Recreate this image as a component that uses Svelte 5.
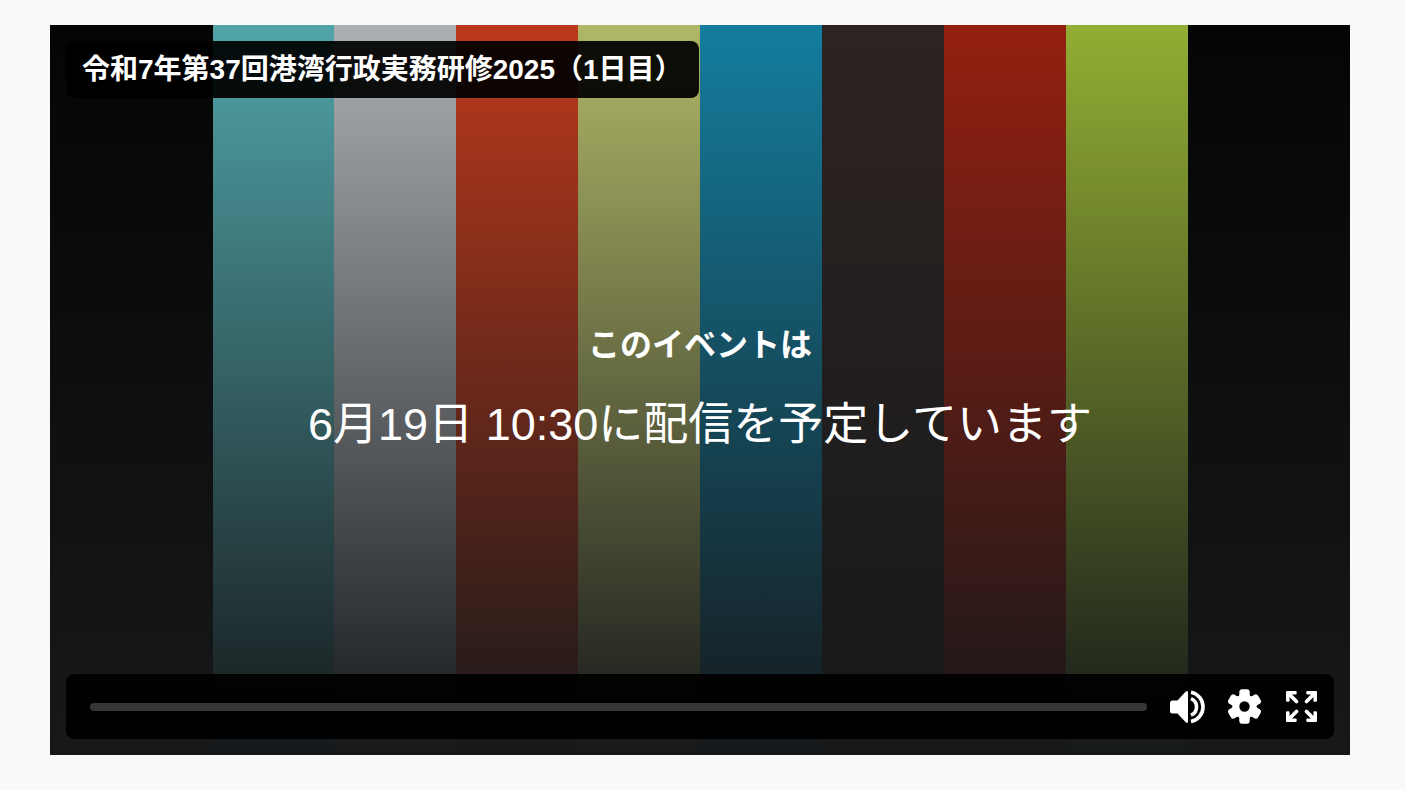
<script>
    let props = $props();
    let title = props.title ?? "令和7年第37回港湾行政実務研修2025（1日目）";
    let startTime = props.startTime ?? "6月19日 10:30";

    let position = $state(0);

    const bars = ["teal", "silver", "orange", "khaki", "blue", "brown", "red", "lime"];
    const teeth = [0, 60, 120, 180, 240, 300];
    const corners = [0, 90, 180, 270];
</script>

<style>
    :global(body) {
        margin: 0;
        background: #f9f9f9;
    }
    .page {
        padding: 25px 55px 35px 50px;
    }
    .player {
        display: grid;
        aspect-ratio: 130 / 73;
        overflow: hidden;
        background: #040505;
        color: #fff;
        font-family: "Liberation Sans", "Noto Sans CJK JP", sans-serif;
    }
    .bars, .shade, .overlay {
        grid-area: 1 / 1;
    }
    .bars {
        display: grid;
        grid-template-columns: repeat(8, 1fr);
        padding: 0 12.5%;
    }
    .teal { background: #50a4a8; }
    .silver { background: #abb0b3; }
    .orange { background: #bc391b; }
    .khaki { background: #b1b767; }
    .blue { background: #147d9e; }
    .brown { background: #2d2422; }
    .red { background: #942010; }
    .lime { background: #92ae33; }
    .shade {
        background: linear-gradient(rgba(22, 24, 26, 0), rgb(22, 24, 26));
    }
    .overlay {
        display: flex;
        flex-direction: column;
        padding: 16px;
    }
    .title {
        align-self: flex-start;
        margin: 0;
        padding: 8px 16px;
        border-radius: 8px;
        background: rgba(0, 0, 0, 0.92);
        font-size: 28px;
        line-height: 41px;
    }
    .message {
        flex: 1;
        display: flex;
        flex-direction: column;
        align-items: center;
        justify-content: center;
        gap: 22px;
        padding-top: 8px;
        text-align: center;
    }
    .message p {
        margin: 0;
    }
    .lead {
        font-size: 32px;
        line-height: 48px;
        font-weight: bold;
    }
    .schedule {
        font-size: 45px;
        line-height: 68px;
    }
    .controls {
        display: flex;
        align-items: center;
        height: 65px;
        padding: 0 4px 0 24px;
        border-radius: 8px;
        background: rgba(0, 0, 0, 0.95);
    }
    .seek {
        appearance: none;
        flex: 1;
        min-width: 0;
        height: 8px;
        margin: 0 12px 0 0;
        border-radius: 4px;
        background: #363636;
        cursor: pointer;
    }
    .seek::-webkit-slider-thumb {
        appearance: none;
        width: 0;
        height: 0;
    }
    button {
        display: grid;
        place-items: center;
        width: 57px;
        height: 57px;
        padding: 0;
        border: 0;
        background: none;
        color: #fff;
        cursor: pointer;
    }
    svg {
        width: 37px;
        height: 37px;
    }
    .line {
        fill: none;
        stroke: currentColor;
    }
</style>

<main class="page">
    <div class="player">
        <div class="bars">
            {#each bars as bar}
                <div class={bar}></div>
            {/each}
        </div>
        <div class="shade"></div>

        <div class="overlay">
            <h1 class="title">{title}</h1>

            <div class="message">
                <p class="lead">このイベントは</p>
                <p class="schedule">{startTime}に配信を予定しています</p>
            </div>

            <div class="controls">
                <input class="seek" type="range" min="0" max="100" aria-label="再生位置" bind:value={position} />

                <button type="button" aria-label="音量">
                    <svg viewBox="0 0 37 37" fill="currentColor">
                        <path d="M3.5 12.5H8.5L16.5 3.8Q19 1.8 19 4.5V33.5Q19 36 16.5 34L8.5 25.5H3.5Q1 25.5 1 23V15Q1 12.5 3.5 12.5Z" />
                        <path class="line" stroke-width="3.6" d="M22 4.2A15 15 0 0 1 22 33.6" />
                        <path class="line" stroke-width="3.6" d="M22 10.6A9 9 0 0 1 22 27.2" />
                    </svg>
                </button>

                <!-- Settings -->
                <button type="button" aria-label="設定">
                    <svg viewBox="-18.5 -18.5 37 37" fill="currentColor">
                        <circle class="line" r="8.6" stroke-width="6.8" />
                        {#each teeth as angle}
                            <path transform="rotate({angle})" d="M-6 -9L-5.2 -12V-15Q-5 -17.2 -2.5 -17.2H2.5Q5 -17.2 5.2 -15V-12L6 -9Z" />
                        {/each}
                    </svg>
                </button>

                <!-- Fullscreen -->
                <button type="button" aria-label="全画面表示">
                    <svg viewBox="-18.5 -18.5 37 37" fill="currentColor">
                        {#each corners as angle}
                            <g transform="rotate({angle})">
                                <path d="M-14.5 -15.5H-6Q-4.8 -15.5 -4.8 -14.3V-13Q-4.8 -11.9 -6 -11.9H-9.4L-11.9 -9.4V-6Q-11.9 -4.8 -13 -4.8H-14.3Q-15.5 -4.8 -15.5 -6V-14.5Q-15.5 -15.5 -14.5 -15.5Z" />
                                <path class="line" stroke-width="3.8" stroke-linecap="round" d="M-12 -12L-5 -5" />
                            </g>
                        {/each}
                    </svg>
                </button>
            </div>
        </div>
    </div>
</main>
